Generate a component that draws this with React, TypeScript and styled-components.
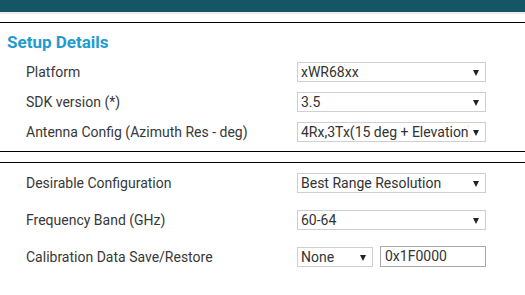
import { FC } from "react";
import styled, { createGlobalStyle } from "styled-components";

const GlobalStyle = createGlobalStyle`
  body {
    margin: 0;
    background: #fff;
    font-family: Roboto, "Liberation Sans", sans-serif;
  }
`;

const Page = styled.div`
  width: 525px;
  height: 295px;
  overflow: hidden;
  background: #fff;
`;

const TopBar = styled.div`
  height: 12px;
  background: #145566;
  box-shadow: 0 2px 1px #ececec;
`;

const Rule = styled.hr<{ $gap: number }>`
  margin: ${(p) => p.$gap}px 0 0;
  border: 0;
  height: 1px;
  background: #000;
`;

const Title = styled.h2`
  margin: 9px 0 0 7px;
  font-size: 17px;
  line-height: 20px;
  font-weight: 700;
  color: #1f9bcf;
`;

const Group = styled.div<{ $top: number; $gap: number }>`
  display: grid;
  grid-template-columns: 271px 189px;
  row-gap: ${(p) => p.$gap}px;
  align-items: center;
  padding: ${(p) => p.$top}px 0 0 26px;
`;

const Label = styled.label`
  font-size: 14px;
  color: #383838;
  white-space: nowrap;
`;

const SelectWrap = styled.div<{ $width?: number }>`
  position: relative;
  width: ${(p) => (p.$width ? `${p.$width}px` : "100%")};
  height: 20px;

  &::after {
    content: "";
    position: absolute;
    right: 7px;
    top: 8px;
    border-left: 3px solid transparent;
    border-right: 3px solid transparent;
    border-top: 6px solid #222;
    pointer-events: none;
  }
`;

const Select = styled.select`
  appearance: none;
  box-sizing: border-box;
  width: 100%;
  height: 100%;
  margin: 0;
  padding: 0 16px 0 3px;
  border: 1px solid #cfcfcf;
  border-radius: 0;
  background: #fff;
  font-family: Roboto, "Liberation Sans", sans-serif;
  font-size: 14px;
  color: #333;
  outline: none;
`;

const Combo = styled.div`
  display: flex;
  align-items: center;
  gap: 7px;
`;

const TextInput = styled.input`
  box-sizing: border-box;
  width: 106px;
  height: 21px;
  margin: -2px 0 0;
  padding: 0 4px;
  border: 1px solid #a9a9a9;
  font-family: Roboto, "Liberation Sans", sans-serif;
  font-size: 14px;
  color: #333;
  outline: none;
`;

type DropProps = { value: string; options: string[]; width?: number };

const Dropdown: FC<DropProps> = ({ value, options, width }) => (
  <SelectWrap $width={width}>
    <Select defaultValue={value}>
      {options.map((o) => (
        <option key={o}>{o}</option>
      ))}
    </Select>
  </SelectWrap>
);

export default function App() {
  return (
    <Page>
      <GlobalStyle />
      <TopBar />
      <Rule $gap={10} />
      <Title>Setup Details</Title>
      <Group $top={10} $gap={10}>
        <Label>Platform</Label>
        <Dropdown value="xWR68xx" options={["xWR14xx", "xWR16xx", "xWR18xx", "xWR68xx"]} />
        <Label>SDK version (*)</Label>
        <Dropdown value="3.5" options={["3.3", "3.4", "3.5"]} />
        <Label>Antenna Config (Azimuth Res - deg)</Label>
        <Dropdown
          value="4Rx,3Tx(15 deg + Elevation)"
          options={["4Rx,3Tx(15 deg + Elevation)", "4Rx,2Tx(30 deg)"]}
        />
      </Group>
      <Rule $gap={9} />
      <Rule $gap={10} />
      <Group $top={10} $gap={17}>
        <Label>Desirable Configuration</Label>
        <Dropdown
          value="Best Range Resolution"
          options={["Best Range Resolution", "Best Velocity Resolution", "Best Range"]}
        />
        <Label>Frequency Band (GHz)</Label>
        <Dropdown value="60-64" options={["60-64"]} />
        <Label>Calibration Data Save/Restore</Label>
        <Combo>
          <Dropdown value="None" options={["None", "Save", "Restore"]} width={76} />
          <TextInput defaultValue="0x1F0000" />
        </Combo>
      </Group>
    </Page>
  );
}
